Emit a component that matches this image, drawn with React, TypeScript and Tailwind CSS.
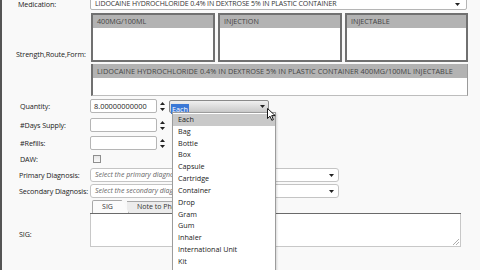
const units = [
  "Each",
  "Bag",
  "Bottle",
  "Box",
  "Capsule",
  "Cartridge",
  "Container",
  "Drop",
  "Gram",
  "Gum",
  "Inhaler",
  "International Unit",
  "Kit",
];

function Caret({ className = "" }: { className?: string }) {
  return (
    <svg width="5" height="3" viewBox="0 0 5 3" className={className}>
      <path d="M0 0h5L2.5 3z" fill="#222" />
    </svg>
  );
}

function Spinner() {
  return (
    <svg width="5" height="9" viewBox="0 0 5 9" className="ml-[3px]">
      <path d="M2.5 0L5 3H0z" fill="#222" />
      <path d="M0 6h5L2.5 9z" fill="#222" />
    </svg>
  );
}

function Label({ children, className = "" }: { children: React.ReactNode; className?: string }) {
  return (
    <div className={`w-[72px] shrink-0 whitespace-nowrap text-[7.2px] tracking-[-0.1px] text-[#222] ${className}`}>
      {children}
    </div>
  );
}

function NumberField({ value = "" }: { value?: string }) {
  return (
    <div className="flex items-center">
      <div className="w-[67px] h-[14px] bg-white border border-[#b5b5b5] rounded-[2px] pl-[3px] text-[7.4px] leading-[12px] text-[#222]">
        {value}
      </div>
      <Spinner />
    </div>
  );
}

function ListBox({ title, className = "" }: { title: string; className?: string }) {
  return (
    <div className={`h-[49px] bg-white border-2 border-[#707070] ${className}`}>
      <div className="h-[13px] bg-[#b3b3b3] pl-[4px] text-[7.2px] leading-[13px] text-[#444]">{title}</div>
    </div>
  );
}

function DiagnosisSelect({ placeholder }: { placeholder: string }) {
  return (
    <div className="w-[249px] h-[14px] bg-white border border-[#c4c4c4] rounded-[3px] flex items-center pl-[4px] pr-[4px]">
      <span className="flex-1 italic whitespace-nowrap text-[7px] text-[#666]">{placeholder}</span>
      <Caret />
    </div>
  );
}

export default function App() {
  return (
    <div
      className="relative w-[480px] h-[270px] overflow-hidden bg-[#f9f9f9] border-l-2 border-[#555]"
      style={{ fontFamily: '"Open Sans", "Noto Sans", sans-serif' }}
    >
      <div className="flex flex-col pl-[16px]">
        {/* Medication */}
        <div className="flex items-center h-[10px]">
          <Label className="-mt-[1px]">Medication:</Label>
          <div className="w-[377px] h-[13px] -mt-[4px] bg-white border border-[#b5b5b5] rounded-[2px] flex items-end pl-[4px] pr-[6px]">
            <span className="flex-1 whitespace-nowrap text-[7px] leading-[10px] text-[#333] tracking-[-0.1px]">
              LIDOCAINE HYDROCHLORIDE 0.4% IN DEXTROSE 5% IN PLASTIC CONTAINER
            </span>
            <Caret className="mb-[3px]" />
          </div>
        </div>

        {/* Strength, Route, Form */}
        <div className="flex mt-[3px] h-[85px]">
          <Label className="pt-[36px] -ml-[2px] mr-[2px]">Strength,Route,Form:</Label>
          <div className="flex flex-col w-[377px] ml-[1px]">
            <div className="flex gap-[3px]">
              <ListBox title="400MG/100ML" className="w-[124px]" />
              <ListBox title="INJECTION" className="w-[124px]" />
              <ListBox title="INJECTABLE" className="w-[123px]" />
            </div>
            <div className="mt-[2px] h-[32px] bg-white border-l-2 border-[#707070] border-r border-b border-r-[#9a9a9a] border-b-[#bdbdbd]">
              <div className="h-[14px] bg-[#b3b3b3] pl-[4px] whitespace-nowrap text-[7.3px] leading-[14px] text-[#444] tracking-[0.05px]">
                LIDOCAINE HYDROCHLORIDE 0.4% IN DEXTROSE 5% IN PLASTIC CONTAINER 400MG/100ML INJECTABLE
              </div>
            </div>
          </div>
        </div>

        {/* Quantity */}
        <div className="flex items-center h-[14px] mt-[1px]">
          <Label className="ml-[2px] -mr-[2px]">Quantity:</Label>
          <NumberField value="8.00000000000" />
          <div className="ml-[4px] w-[100px] h-[13px] border border-[#8a8a8a] rounded-[2px] bg-gradient-to-b from-[#f0f0f0] to-[#c9c9c9] flex items-center pl-[1px] pr-[3px]">
            <span className="flex-1">
              <span className="bg-[#3a78d6] text-white text-[7.2px] px-[1px] leading-[10px] inline-block">Each</span>
            </span>
            <Caret />
          </div>
        </div>

        {/* Days supply */}
        <div className="flex items-center h-[14px] mt-[5px]">
          <Label className="ml-[2px] -mr-[2px]">#Days Supply:</Label>
          <NumberField />
        </div>

        {/* Refills */}
        <div className="flex items-center h-[14px] mt-[4px]">
          <Label className="ml-[2px] -mr-[2px]">#Refills:</Label>
          <NumberField />
        </div>

        {/* DAW */}
        <div className="flex items-center h-[10px] mt-[4px]">
          <Label className="ml-[2px] -mr-[2px]">DAW:</Label>
          <div className="ml-[3px] w-[8px] h-[8px] border border-[#8e8e8e] bg-gradient-to-b from-[#e6e6e6] to-[#fafafa]" />
        </div>

        {/* Primary Diagnosis */}
        <div className="flex items-center h-[14px] mt-[4px]">
          <Label className="ml-[1px] -mr-[1px]">Primary Diagnosis:</Label>
          <DiagnosisSelect placeholder="Select the primary diagnosis" />
        </div>

        {/* Secondary Diagnosis */}
        <div className="flex items-center h-[14px] mt-[2px]">
          <Label className="ml-[1px] -mr-[1px]">Secondary Diagnosis:</Label>
          <DiagnosisSelect placeholder="Select the secondary diagnosis" />
        </div>

        {/* SIG */}
        <div className="flex mt-[3px]">
          <Label className="ml-[1px] -mr-[1px] pt-[28px]">SIG:</Label>
          <div className="flex flex-col w-[371px]">
            <div className="flex h-[13px] items-end border-b border-[#6a6a6a] pl-[2px]">
              <div className="w-[37px] h-[13px] bg-[#fbfbfb] border border-b-0 border-[#a8a8a8] rounded-tl-[2px] [clip-path:polygon(0_0,80%_0,100%_100%,0_100%)] flex items-center justify-center pr-[6px] text-[7px] text-[#333]">
                SIG
              </div>
              <div className="-ml-[2px] w-[70px] h-[12px] bg-[#ececec] border-t border-[#a8a8a8] flex items-center pl-[10px] whitespace-nowrap overflow-hidden text-[7px] text-[#333]">
                Note to Pharmacist
              </div>
            </div>
            <div className="relative h-[33px] bg-white border border-t-0 border-[#c8c8c8]">
              <svg width="6" height="6" viewBox="0 0 6 6" className="absolute right-[1px] bottom-[1px]">
                <path d="M6 0L0 6M6 3L3 6" stroke="#999" strokeWidth="0.8" />
              </svg>
            </div>
          </div>
        </div>
      </div>

      {/* Unit dropdown list */}
      <div className="absolute left-[170px] top-[112px] w-[104px] h-[170px] bg-white border border-[#9c9c9c] shadow-[1px_1px_2px_rgba(0,0,0,0.15)] pt-[1px]">
        {units.map((u, i) => (
          <div
            key={u}
            className={`h-[11.83px] leading-[11.83px] pl-[5px] text-[7.2px] text-[#222] ${
              i === 0 ? "bg-[#c9c9c9]" : ""
            }`}
          >
            {u}
          </div>
        ))}
      </div>

      {/* Mouse cursor */}
      <svg width="9" height="13" viewBox="0 0 9 13" className="absolute left-[265px] top-[108px]">
        <path d="M0.5 0.5V10.5L3 8.2L4.8 12.3L6.4 11.6L4.7 7.6H8.2Z" fill="#fff" stroke="#000" strokeWidth="0.9" strokeLinejoin="round" />
      </svg>
    </div>
  );
}
